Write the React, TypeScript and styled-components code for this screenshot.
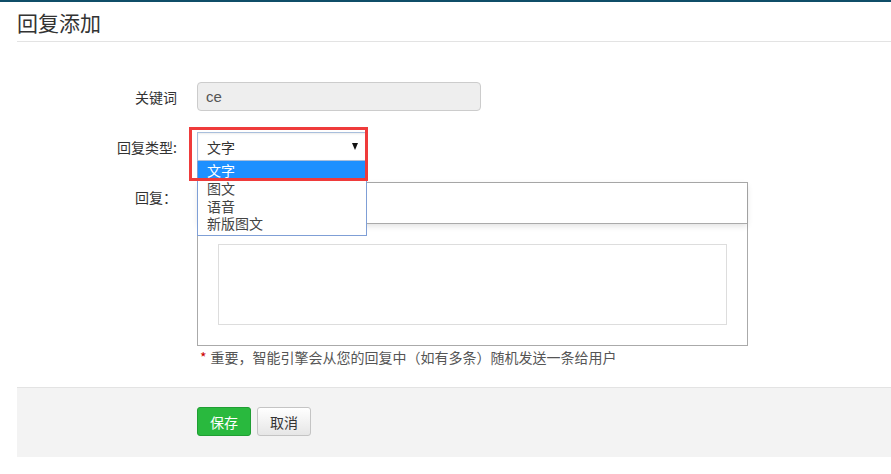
import React from "react";
import styled, { createGlobalStyle } from "styled-components";

const GlobalStyle = createGlobalStyle`
  html, body {
    margin: 0;
    padding: 0;
    background: #fff;
  }
  body {
    font-family: "Microsoft YaHei", "Noto Sans CJK SC", "Liberation Sans", sans-serif;
    color: #333;
  }
`;

const TopLine = styled.div`
  height: 2px;
  background: #0f4d68;
`;

const Page = styled.div`
  margin-left: 17px;
`;

const Header = styled.div`
  height: 39px;
  border-bottom: 1px solid #e3e3e3;
  display: flex;
  align-items: center;
`;

const Title = styled.h1`
  margin: 0;
  font-size: 21px;
  font-weight: normal;
  color: #333;
  line-height: 26px;
`;

const Form = styled.div`
  padding-top: 40px;
  display: grid;
  grid-template-columns: 180px 1fr;
  row-gap: 21px;
`;

const Label = styled.div<{ $top?: boolean }>`
  text-align: right;
  padding-right: 20px;
  font-size: 14px;
  color: #333;
  display: flex;
  justify-content: flex-end;
  align-items: ${(p) => (p.$top ? "flex-start" : "center")};
  padding-top: ${(p) => (p.$top ? "5px" : "0")};
`;

const Field = styled.div`
  position: relative;
`;

const TextInput = styled.div`
  box-sizing: border-box;
  width: 284px;
  height: 29px;
  background: #eee;
  border: 1px solid #ccc;
  border-radius: 4px;
  padding: 0 8px;
  font-size: 15px;
  color: #555;
  display: flex;
  align-items: center;
  font-family: "Liberation Sans", "Noto Sans CJK SC", sans-serif;
`;

const SelectWrap = styled.div`
  position: relative;
  width: 170px;
`;

const SelectBox = styled.div`
  box-sizing: border-box;
  height: 29px;
  border: 1px solid #a9bfdc;
  box-shadow: inset 0 1px 2px rgba(0, 0, 0, 0.08);
  background: #fff;
  display: flex;
  align-items: center;
  justify-content: space-between;
  padding: 0 8px 0 9px;
  font-size: 14px;
  color: #333;
`;

const Arrow = styled.span`
  width: 0;
  height: 0;
  border-left: 3.5px solid transparent;
  border-right: 3.5px solid transparent;
  border-top: 7px solid #111;
`;

const Dropdown = styled.ul`
  position: absolute;
  top: 29px;
  left: 0;
  box-sizing: border-box;
  width: 170px;
  margin: 0;
  padding: 0 0 2px;
  list-style: none;
  background: #fff;
  border: 1px solid #7f9fd6;
  border-top: none;
  z-index: 5;
`;

const Option = styled.li<{ $active?: boolean }>`
  font-size: 14px;
  line-height: 17.5px;
  padding-left: 9px;
  color: ${(p) => (p.$active ? "#fff" : "#444")};
  background: ${(p) => (p.$active ? "#1e90ff" : "transparent")};
  ${(p) => (p.$active ? "height: 19px; line-height: 19px;" : "")}
`;

const Highlight = styled.div`
  position: absolute;
  left: -8px;
  top: -5px;
  width: 179px;
  height: 54px;
  box-sizing: border-box;
  border: 3px solid #ef3b3b;
  z-index: 6;
  pointer-events: none;
`;

const Editor = styled.div`
  box-sizing: border-box;
  width: 551px;
  height: 164px;
  border: 1px solid #aaa;
  display: flex;
  flex-direction: column;
`;

const Toolbar = styled.div`
  height: 40px;
  border-bottom: 1px solid #aaa;
  box-shadow: 0 2px 6px rgba(0, 0, 0, 0.12);
`;

const EditorBody = styled.div`
  flex: 1;
  padding: 20px;
`;

const TextArea = styled.div`
  height: 100%;
  border: 1px solid #ddd;
  box-sizing: border-box;
`;

const Note = styled.div`
  margin-top: 2px;
  padding-left: 3px;
  font-size: 14px;
  color: #555;
  line-height: 18px;
`;

const Star = styled.span`
  color: #c00;
  margin-right: 4px;
`;

const Footer = styled.div`
  margin-top: 21px;
  background: #f3f3f3;
  border-top: 1px solid #e3e3e3;
  padding: 19px 0 21px 180px;
  display: flex;
  gap: 6px;
`;

const Button = styled.button<{ $primary?: boolean }>`
  height: 29px;
  padding: 0 12px;
  font-size: 14px;
  font-family: inherit;
  border-radius: 3px;
  cursor: pointer;
  border: 1px solid ${(p) => (p.$primary ? "#1f9e33" : "#c4c4c4")};
  color: ${(p) => (p.$primary ? "#fff" : "#333")};
  background: ${(p) =>
    p.$primary ? "#29b93e" : "linear-gradient(#ffffff, #e6e6e6)"};
`;

export default function App() {
  return (
    <>
      <GlobalStyle />
      <TopLine />
      <Page>
        <Header>
          <Title>回复添加</Title>
        </Header>
        <Form>
          <Label>关键词</Label>
          <Field>
            <TextInput>ce</TextInput>
          </Field>

          <Label>回复类型:</Label>
          <Field>
            <SelectWrap>
              <SelectBox>
                <span>文字</span>
                <Arrow />
              </SelectBox>
              <Dropdown>
                <Option $active>文字</Option>
                <Option>图文</Option>
                <Option>语音</Option>
                <Option>新版图文</Option>
              </Dropdown>
              <Highlight />
            </SelectWrap>
          </Field>

          <Label $top>回复：</Label>
          <Field>
            <Editor>
              <Toolbar />
              <EditorBody>
                <TextArea />
              </EditorBody>
            </Editor>
            <Note>
              <Star>*</Star>重要，智能引擎会从您的回复中（如有多条）随机发送一条给用户
            </Note>
          </Field>
        </Form>
        <Footer>
          <Button $primary>保存</Button>
          <Button>取消</Button>
        </Footer>
      </Page>
    </>
  );
}
